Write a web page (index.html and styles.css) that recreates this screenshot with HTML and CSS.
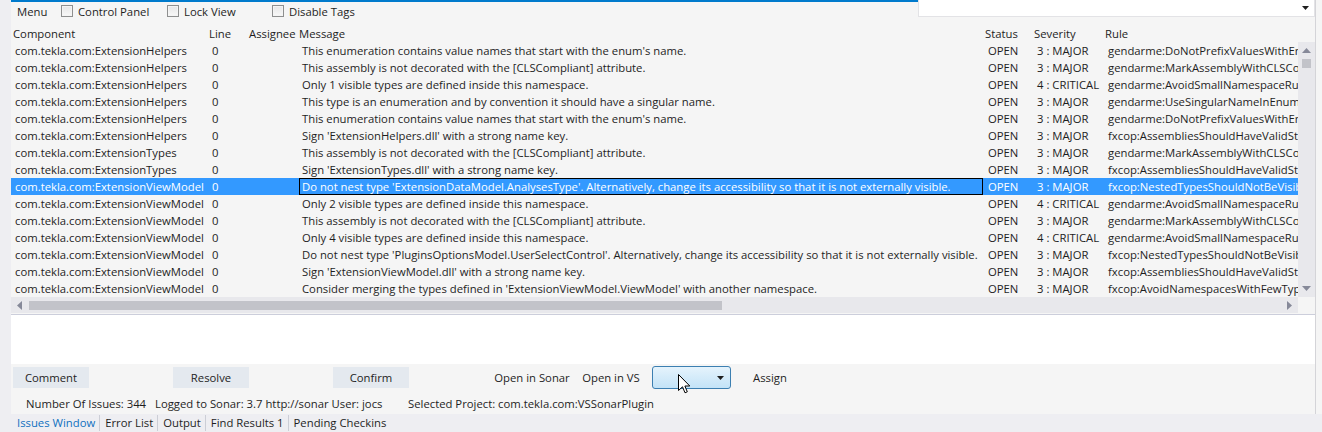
FILE: index.html
```html
<!DOCTYPE html>
<html>
<head>
<meta charset="utf-8">
<link rel="stylesheet" href="styles.css">
</head>
<body>
<div class="main">
  <div class="gutter"></div>
  <div class="panel">
    <div class="topbar">
      <div class="toolbar">
        <span class="menu">Menu</span>
        <label class="check w-cp"><span class="box"></span>Control Panel</label>
        <label class="check w-lv"><span class="box"></span>Lock View</label>
        <label class="check"><span class="box"></span>Disable Tags</label>
      </div>
      <div class="combo-top">
        <svg class="drop" width="7" height="4" viewBox="0 0 7 4"><path d="M0 0H7L3.5 4Z" fill="#1e1e1e"/></svg>
      </div>
    </div>

    <div class="row head">
      <div class="c">Component</div><div class="c">Line</div><div class="c">Assignee</div><div class="c">Message</div><div class="c">Status</div><div class="c">Severity</div><div class="c">Rule</div>
    </div>

    <div class="gridbody">
      <div class="rows">
        <div class="row"><div class="c">com.tekla.com:ExtensionHelpers</div><div class="c">0</div><div class="c"></div><div class="c">This enumeration contains value names that start with the enum's name.</div><div class="c">OPEN</div><div class="c">3 : MAJOR</div><div class="c">gendarme:DoNotPrefixValuesWithEnumNameRule</div></div>
        <div class="row"><div class="c">com.tekla.com:ExtensionHelpers</div><div class="c">0</div><div class="c"></div><div class="c">This assembly is not decorated with the [CLSCompliant] attribute.</div><div class="c">OPEN</div><div class="c">3 : MAJOR</div><div class="c">gendarme:MarkAssemblyWithCLSCompliantRule</div></div>
        <div class="row"><div class="c">com.tekla.com:ExtensionHelpers</div><div class="c">0</div><div class="c"></div><div class="c">Only 1 visible types are defined inside this namespace.</div><div class="c">OPEN</div><div class="c">4 : CRITICAL</div><div class="c">gendarme:AvoidSmallNamespaceRule</div></div>
        <div class="row"><div class="c">com.tekla.com:ExtensionHelpers</div><div class="c">0</div><div class="c"></div><div class="c">This type is an enumeration and by convention it should have a singular name.</div><div class="c">OPEN</div><div class="c">3 : MAJOR</div><div class="c">gendarme:UseSingularNameInEnumsUnlessAreFlagsRule</div></div>
        <div class="row"><div class="c">com.tekla.com:ExtensionHelpers</div><div class="c">0</div><div class="c"></div><div class="c">This enumeration contains value names that start with the enum's name.</div><div class="c">OPEN</div><div class="c">3 : MAJOR</div><div class="c">gendarme:DoNotPrefixValuesWithEnumNameRule</div></div>
        <div class="row"><div class="c">com.tekla.com:ExtensionHelpers</div><div class="c">0</div><div class="c"></div><div class="c">Sign 'ExtensionHelpers.dll' with a strong name key.</div><div class="c">OPEN</div><div class="c">3 : MAJOR</div><div class="c">fxcop:AssembliesShouldHaveValidStrongNames</div></div>
        <div class="row"><div class="c">com.tekla.com:ExtensionTypes</div><div class="c">0</div><div class="c"></div><div class="c">This assembly is not decorated with the [CLSCompliant] attribute.</div><div class="c">OPEN</div><div class="c">3 : MAJOR</div><div class="c">gendarme:MarkAssemblyWithCLSCompliantRule</div></div>
        <div class="row"><div class="c">com.tekla.com:ExtensionTypes</div><div class="c">0</div><div class="c"></div><div class="c">Sign 'ExtensionTypes.dll' with a strong name key.</div><div class="c">OPEN</div><div class="c">3 : MAJOR</div><div class="c">fxcop:AssembliesShouldHaveValidStrongNames</div></div>
        <div class="row sel"><div class="c">com.tekla.com:ExtensionViewModel</div><div class="c">0</div><div class="c"></div><div class="c focus">Do not nest type 'ExtensionDataModel.AnalysesType'. Alternatively, change its accessibility so that it is not externally visible.</div><div class="c">OPEN</div><div class="c">3 : MAJOR</div><div class="c">fxcop:NestedTypesShouldNotBeVisible</div></div>
        <div class="row"><div class="c">com.tekla.com:ExtensionViewModel</div><div class="c">0</div><div class="c"></div><div class="c">Only 2 visible types are defined inside this namespace.</div><div class="c">OPEN</div><div class="c">4 : CRITICAL</div><div class="c">gendarme:AvoidSmallNamespaceRule</div></div>
        <div class="row"><div class="c">com.tekla.com:ExtensionViewModel</div><div class="c">0</div><div class="c"></div><div class="c">This assembly is not decorated with the [CLSCompliant] attribute.</div><div class="c">OPEN</div><div class="c">3 : MAJOR</div><div class="c">gendarme:MarkAssemblyWithCLSCompliantRule</div></div>
        <div class="row"><div class="c">com.tekla.com:ExtensionViewModel</div><div class="c">0</div><div class="c"></div><div class="c">Only 4 visible types are defined inside this namespace.</div><div class="c">OPEN</div><div class="c">4 : CRITICAL</div><div class="c">gendarme:AvoidSmallNamespaceRule</div></div>
        <div class="row"><div class="c">com.tekla.com:ExtensionViewModel</div><div class="c">0</div><div class="c"></div><div class="c">Do not nest type 'PluginsOptionsModel.UserSelectControl'. Alternatively, change its accessibility so that it is not externally visible.</div><div class="c">OPEN</div><div class="c">3 : MAJOR</div><div class="c">fxcop:NestedTypesShouldNotBeVisible</div></div>
        <div class="row"><div class="c">com.tekla.com:ExtensionViewModel</div><div class="c">0</div><div class="c"></div><div class="c">Sign 'ExtensionViewModel.dll' with a strong name key.</div><div class="c">OPEN</div><div class="c">3 : MAJOR</div><div class="c">fxcop:AssembliesShouldHaveValidStrongNames</div></div>
        <div class="row"><div class="c">com.tekla.com:ExtensionViewModel</div><div class="c">0</div><div class="c"></div><div class="c">Consider merging the types defined in 'ExtensionViewModel.ViewModel' with another namespace.</div><div class="c">OPEN</div><div class="c">3 : MAJOR</div><div class="c">fxcop:AvoidNamespacesWithFewTypes</div></div>
      </div>
      <div class="vscroll">
        <div class="arrow"><svg width="9" height="5" viewBox="0 0 9 5"><path d="M4.5 0L9 5H0Z" fill="#868999"/></svg></div>
        <div class="vthumb"></div>
        <div class="spacer"></div>
        <div class="arrow"><svg width="9" height="5" viewBox="0 0 9 5"><path d="M0 0H9L4.5 5Z" fill="#868999"/></svg></div>
      </div>
    </div>

    <div class="hscroll">
      <div class="htrack">
        <div class="harrow"><svg width="5" height="9" viewBox="0 0 5 9"><path d="M5 0V9L0 4.5Z" fill="#868999"/></svg></div>
        <div class="hthumb"></div>
        <div class="spacer"></div>
        <div class="harrow"><svg width="5" height="9" viewBox="0 0 5 9"><path d="M0 0V9L5 4.5Z" fill="#868999"/></svg></div>
      </div>
    </div>

    <div class="notes"></div>

    <div class="actions">
      <button class="btn">Comment</button>
      <button class="btn">Resolve</button>
      <button class="btn">Confirm</button>
      <button class="link w-sonar">Open in Sonar</button>
      <button class="link w-vs">Open in VS</button>
      <div class="combo">
        <svg width="7" height="4" viewBox="0 0 7 4"><path d="M0 0H7L3.5 4Z" fill="#1e1e1e"/></svg>
      </div>
      <button class="link w-assign">Assign</button>
    </div>

    <div class="status">
      <span class="s1">Number Of Issues: 344</span>
      <span class="s2">Logged to Sonar: 3.7 http://sonar User: jocs</span>
      <span>Selected Project: com.tekla.com:VSSonarPlugin</span>
    </div>
  </div>
  <div class="edge"></div>
</div>
<div class="tabs">
  <span class="tab active">Issues Window</span>
  <span class="tab">Error List</span>
  <span class="tab">Output</span>
  <span class="tab">Find Results 1</span>
  <span class="tab last">Pending Checkins</span>
</div>
<svg class="cursor" width="13" height="20" viewBox="0 0 13 20"><path d="M0.5 0.5V16.5L4.5 12.8L7 18.8L9.3 17.8L6.9 12H11.8Z" fill="#fff" stroke="#000" stroke-width="1" stroke-linejoin="round"/></svg>
</body>
</html>
```

FILE: styles.css
```css
* { box-sizing: border-box; }

body {
  margin: 0;
  width: 1322px;
  height: 432px;
  overflow: hidden;
  position: relative;
  background: #eeeef2;
  font-family: "Open Sans", "Noto Sans", sans-serif;
  font-size: 11.3px;
  color: #1e1e1e;
}

.main { display: flex; height: 414px; }
.gutter { width: 11px; background: #eeeef2; }
.panel {
  width: 1305px;
  background: #f5f5f5;
  border-right: 1px solid #d4d4d8;
  display: flex;
  flex-direction: column;
}
.edge { flex: 1; background: #f5f5f5; }

/* top bar */
.topbar { display: flex; align-items: flex-start; height: 25px; }
.toolbar {
  width: 907px;
  height: 20px;
  border-top: 2px solid #007acc;
  display: flex;
  align-items: center;
  padding-left: 6px;
}
.menu { width: 44px; }
.check { display: flex; align-items: center; gap: 5px; }
.w-cp { width: 106px; }
.w-lv { width: 105px; }
.box {
  width: 12px;
  height: 12px;
  border: 1px solid #8e8f8f;
  background: linear-gradient(#e6e6e6, #f8f8f8);
  box-shadow: inset 0 0 0 1px #f4f4f4;
}
.combo-top {
  flex: 1;
  height: 17px;
  background: #fff;
  border: 1px solid #e3e3e6;
  border-top: none;
  display: flex;
  align-items: center;
  justify-content: flex-end;
  padding-right: 5px;
}

/* grid */
.row {
  display: grid;
  grid-template-columns: 196px 40px 50px 686px 49px 71px 195px;
  height: 17px;
  line-height: 17px;
}
.c { white-space: nowrap; overflow: hidden; padding-left: 5px; }
.row .c:first-child { padding-left: 4px; }
.head .c, .head .c:first-child { padding-left: 2px; }
.sel { background: #3399ff; color: #fff; }
.sel .focus { margin-left: 2px; padding-left: 3px; box-shadow: inset 0 0 0 1px #000; }

.gridbody { display: flex; height: 255px; }
.rows { width: 1287px; overflow: hidden; }
.vscroll {
  width: 17px;
  background: #e8e8ec;
  display: flex;
  flex-direction: column;
}
.arrow { height: 17px; display: flex; align-items: center; justify-content: center; }
.vthumb { width: 9px; height: 9px; margin-left: 4px; background: #c2c3c9; }
.spacer { flex: 1; }

.hscroll { height: 16px; display: flex; }
.htrack { width: 1287px; background: #e8e8ec; display: flex; align-items: center; }
.harrow { width: 17px; height: 16px; display: flex; align-items: center; justify-content: center; }
.hthumb { width: 693px; height: 9px; margin-left: 1px; background: #c2c3c9; }

.notes {
  margin-top: 1px;
  height: 50px;
  background: #fff;
  border-top: 1px solid #cccedb;
}

/* action buttons */
.actions {
  display: flex;
  align-items: center;
  height: 23px;
  margin-top: 2px;
  padding-left: 2px;
}
button {
  font: inherit;
  color: inherit;
  border: none;
  padding: 0;
  height: 21px;
  background: transparent;
}
.btn { width: 76px; background: #e4e9ef; margin-right: 84px; }
.btn:nth-child(3) { margin-right: 0; }
.w-sonar { width: 80px; margin-left: 83px; }
.w-vs { width: 64px; margin-left: 7px; }
.w-assign { width: 50px; margin-left: 14px; }
.combo {
  width: 79px;
  height: 23px;
  margin-left: 9px;
  border: 1px solid #3c7fb1;
  border-radius: 3px;
  background: linear-gradient(#e5f3fc, #c3e3f7);
  display: flex;
  align-items: center;
  justify-content: flex-end;
  padding-right: 6px;
}

/* status */
.status {
  height: 25px;
  display: flex;
  align-items: center;
  padding: 3px 0 0 15px;
}
.s1 { width: 129px; }
.s2 { width: 253px; }

/* tabs */
.tabs {
  height: 18px;
  display: flex;
  align-items: center;
  padding-left: 12px;
  background: #eeeef2;
}
.tab { padding: 0 4px 0 5px; border-right: 1px solid #ccced6; line-height: 16px; }
.tab.last { border-right: none; }
.active { color: #0e70c0; }

.cursor { position: absolute; left: 678px; top: 374px; }
```
